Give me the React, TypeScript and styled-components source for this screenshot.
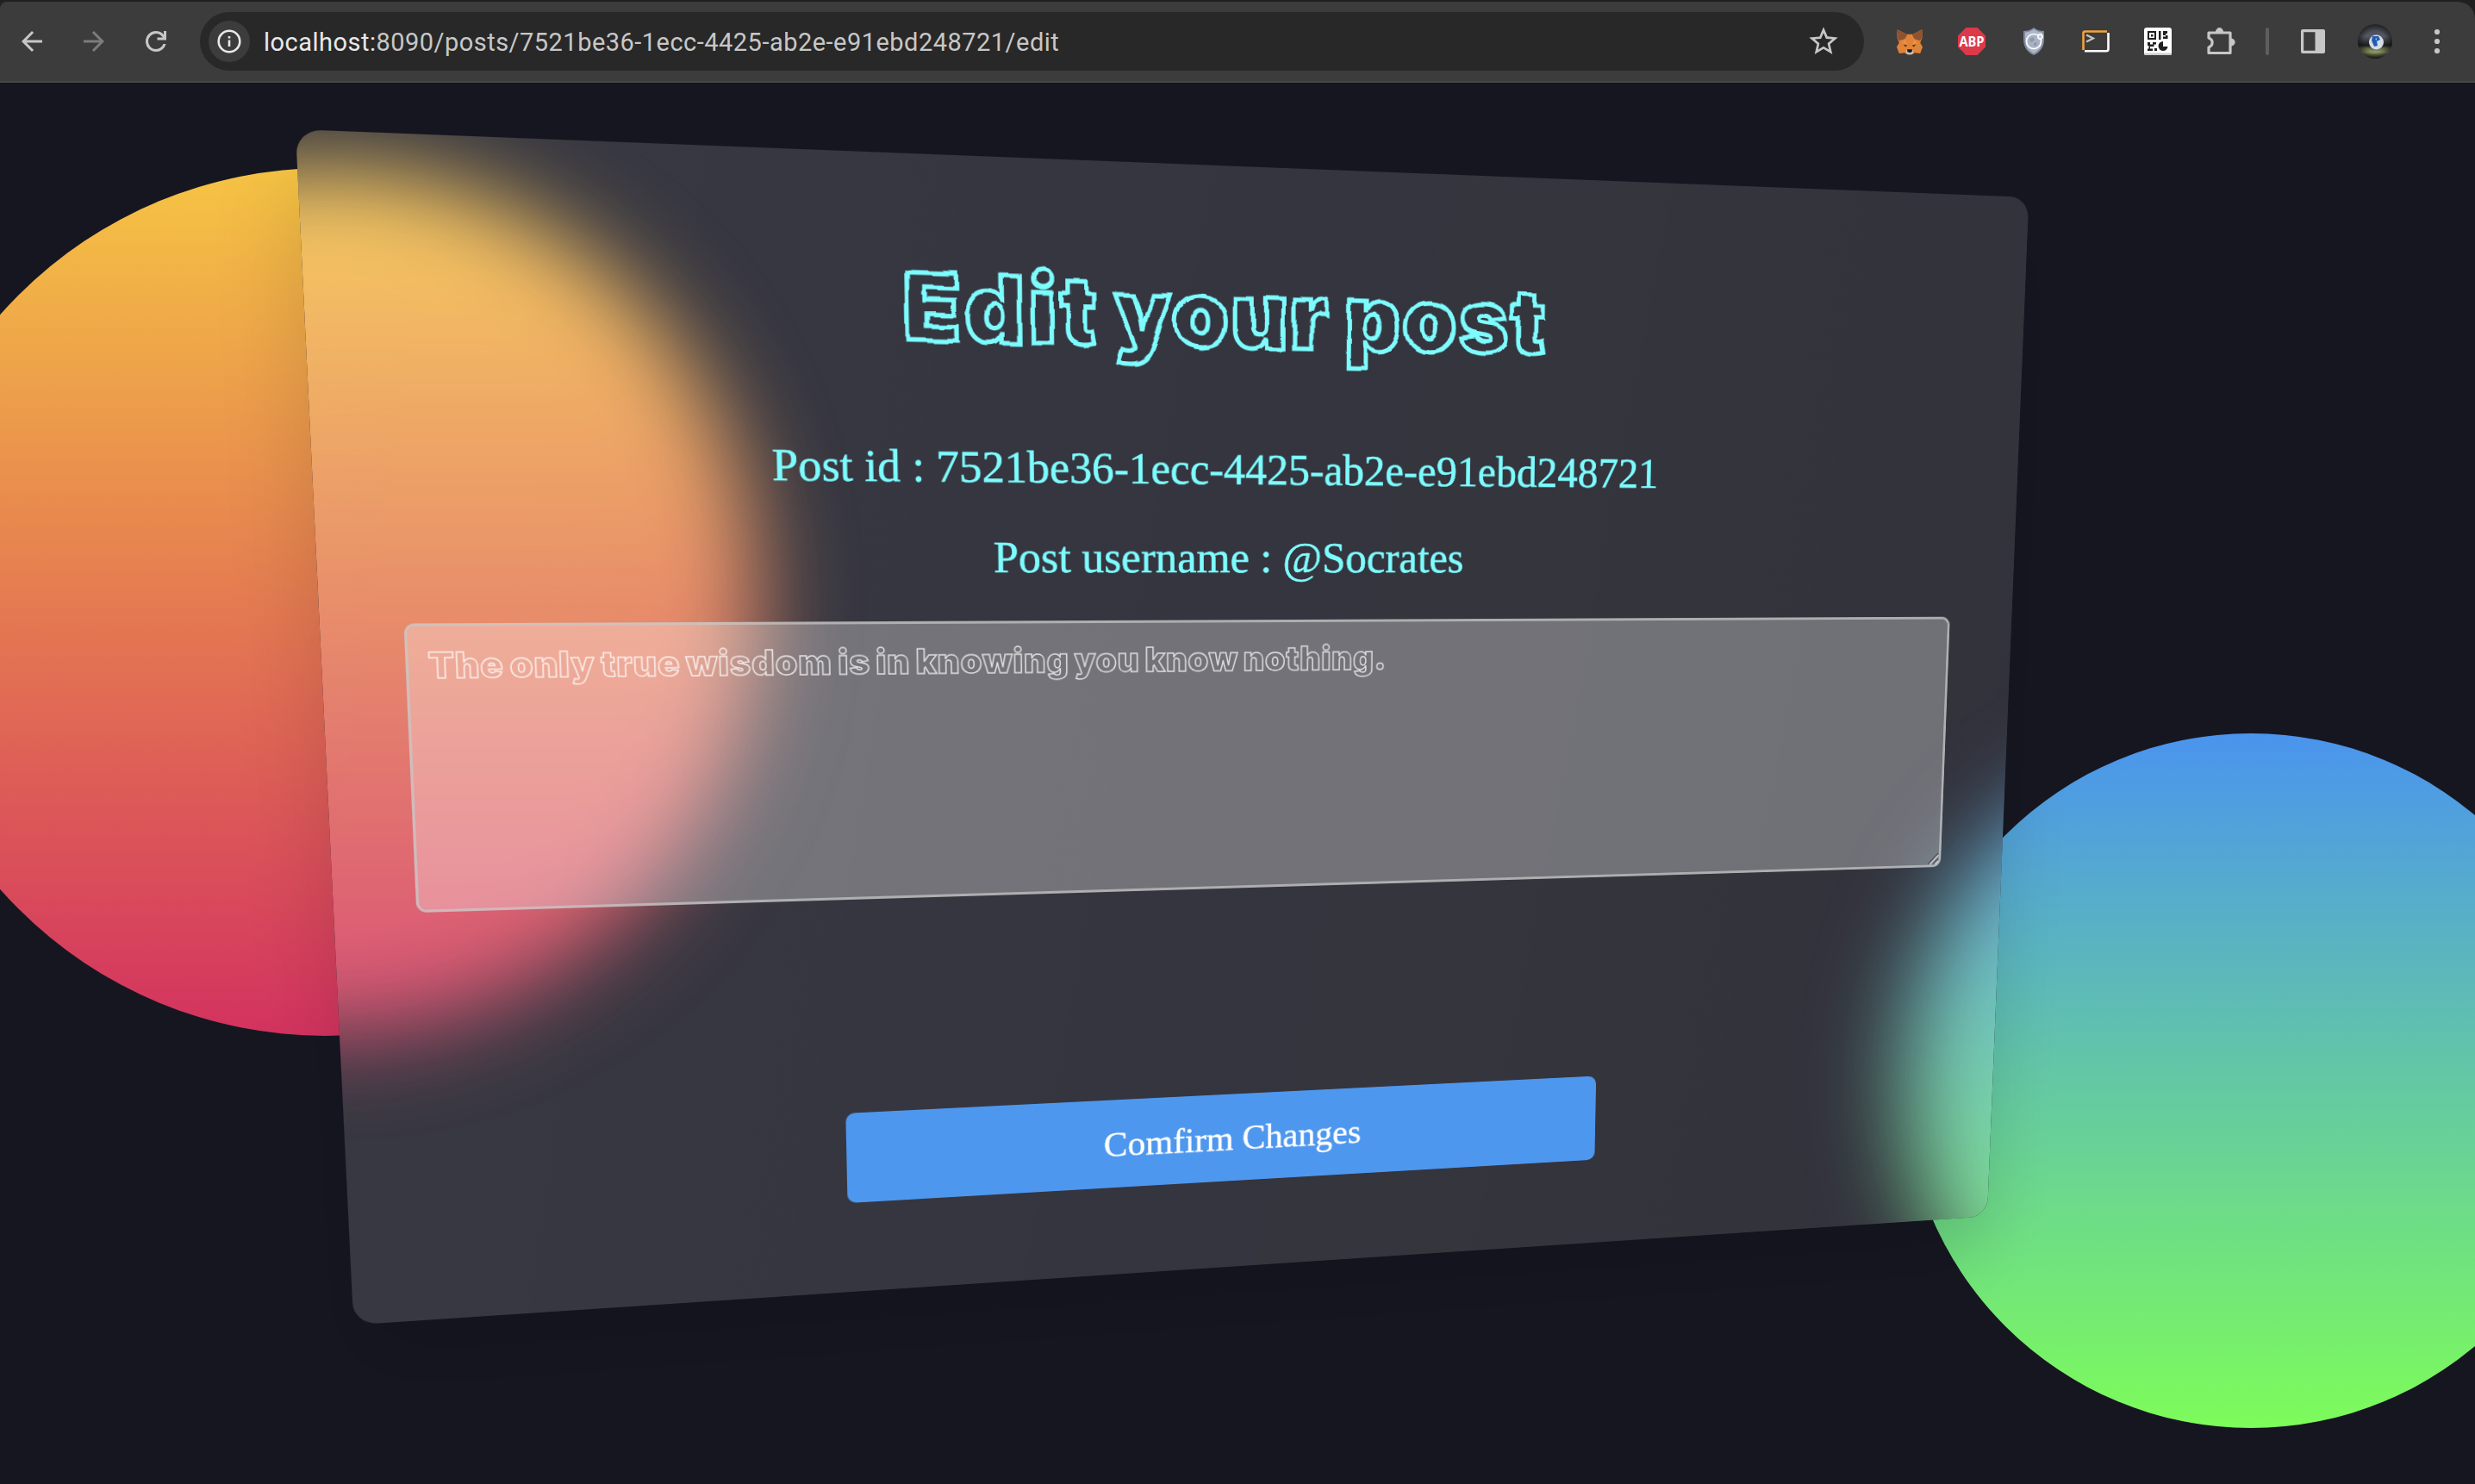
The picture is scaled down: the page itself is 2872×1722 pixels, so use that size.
import React from "react";
import styled, { createGlobalStyle } from "styled-components";

type Point = [number, number];
type Matrix = { a: number; b: number; c: number; d: number; e: number; f: number; g: number; k: number };

const CARD_W = 1970;
const CARD_H = 1288;
const CARD_RADIUS = 25;

/* Where the untilted card sits on the stage (it is centred there). */
const STAGE_W = 2872;
const STAGE_H = 1626;
const ORIGIN: Point = [(STAGE_W - CARD_W) / 2, (STAGE_H - CARD_H) / 2];

/** Solves the projection that puts the corners of a w x h box on the given points. */
function project(w: number, h: number, [p0, p1, p2, p3]: [Point, Point, Point, Point]): Matrix {
  const dx1 = p1[0] - p2[0];
  const dx2 = p3[0] - p2[0];
  const dx3 = p0[0] - p1[0] + p2[0] - p3[0];
  const dy1 = p1[1] - p2[1];
  const dy2 = p3[1] - p2[1];
  const dy3 = p0[1] - p1[1] + p2[1] - p3[1];
  const det = dx1 * dy2 - dx2 * dy1;
  const g = (dx3 * dy2 - dx2 * dy3) / det;
  const k = (dx1 * dy3 - dx3 * dy1) / det;
  return {
    a: (p1[0] - p0[0] + g * p1[0]) / w,
    b: (p3[0] - p0[0] + k * p3[0]) / h,
    c: p0[0],
    d: (p1[1] - p0[1] + g * p1[1]) / w,
    e: (p3[1] - p0[1] + k * p3[1]) / h,
    f: p0[1],
    g: g / w,
    k: k / h,
  };
}

const m = project(CARD_W, CARD_H, [
  [-108.1, -115],
  [1903.4, -36.1],
  [1854.9, 1146.5],
  [-40.7, 1272.4],
]);

const cardTilt = `matrix3d(${[m.a, m.d, 0, m.g, m.b, m.e, 0, m.k, 0, 0, 1, 0, m.c, m.f, 0, 1]
  .map((v) => v.toFixed(10))
  .join(",")})`;

/** A point of the card, as it falls on the stage. */
function onStage(x: number, y: number): string {
  const w = m.g * x + m.k * y + 1;
  const px = (m.a * x + m.b * y + m.c) / w + ORIGIN[0];
  const py = (m.d * x + m.e * y + m.f) / w + ORIGIN[1];
  return `${px.toFixed(2)} ${py.toFixed(2)}`;
}

/** Outline of the tilted card, rounded corners included. */
function cardOutline(): string {
  const W = CARD_W;
  const H = CARD_H;
  const r = CARD_RADIUS;
  const q = r * 0.4477;
  const p = onStage;
  return [
    `M ${p(r, 0)}`,
    `L ${p(W - r, 0)} C ${p(W - q, 0)} ${p(W, q)} ${p(W, r)}`,
    `L ${p(W, H - r)} C ${p(W, H - q)} ${p(W - q, H)} ${p(W - r, H)}`,
    `L ${p(r, H)} C ${p(q, H)} ${p(0, H - q)} ${p(0, H - r)}`,
    `L ${p(0, r)} C ${p(0, q)} ${p(q, 0)} ${p(r, 0)} Z`,
  ].join(" ");
}

const GlobalStyle = createGlobalStyle`
  html, body { margin: 0; background: #161621; }
  *, *::before, *::after { box-sizing: border-box; }
`;

const Window = styled.div`
  display: flex;
  flex-direction: column;
  width: 2872px;
  height: 1722px;
  overflow: hidden;
  background: #161621;
`;

const Strip = styled.div`
  flex: none;
  height: 96px;
  padding-top: 2px;
  background: #202020;
`;

const Toolbar = styled.header`
  display: flex;
  align-items: center;
  height: 94px;
  padding: 0 0 0 19px;
  background: #3c3c3c;
  border-bottom: 2px solid #474747;
  border-radius: 8px 20px 0 0;
  font-family: Roboto, "Liberation Sans", sans-serif;
`;

const NavButtons = styled.nav`
  display: flex;
  align-items: center;
  gap: 36px;
  width: 213px;
  flex: none;
`;

const NavIcon = styled.svg<{ $dim?: boolean; $size?: number }>`
  width: ${(p) => p.$size ?? 36}px;
  height: ${(p) => p.$size ?? 36}px;
  flex: none;
  fill: ${(p) => (p.$dim ? "#7c7c7c" : "#c7c7c7")};
`;

const AddressBar = styled.div`
  display: flex;
  align-items: center;
  flex: none;
  width: 1931px;
  height: 68px;
  padding: 0 27px 0 10px;
  border-radius: 34px;
  background: #282828;
`;

const InfoBadge = styled.span`
  display: flex;
  align-items: center;
  justify-content: center;
  width: 48px;
  height: 48px;
  border-radius: 50%;
  background: #3c3c3c;
`;

const Url = styled.span`
  flex: 1;
  margin-left: 16px;
  padding-top: 1px;
  font-size: 29px;
  letter-spacing: 0.48px;
  color: #c7c7c7;
  white-space: nowrap;
`;

const Host = styled.span`
  color: #e8e8e8;
`;

const Extensions = styled.div`
  display: flex;
  align-items: center;
  margin-left: 9px;
`;

const Slot = styled.span<{ $w: number }>`
  display: flex;
  align-items: center;
  justify-content: center;
  flex: none;
  width: ${(p) => p.$w}px;
  height: 48px;
`;

const Divider = styled.span`
  width: 4px;
  height: 32px;
  border-radius: 2px;
  background: #5e5e5e;
`;

const Stage = styled.main`
  position: relative;
  flex: 1;
  display: flex;
  align-items: center;
  justify-content: center;
  overflow: hidden;
`;

const Circle = styled.div<{ $size: number; $x: number; $y: number; $from: string; $to: string }>`
  position: absolute;
  left: ${(p) => p.$x}px;
  top: ${(p) => p.$y}px;
  width: ${(p) => p.$size}px;
  height: ${(p) => p.$size}px;
  border-radius: 50%;
  background: linear-gradient(${(p) => p.$from}, ${(p) => p.$to});
`;

const Frost = styled.div`
  position: absolute;
  inset: 0;
  z-index: 1;
  background: #161621;
  clip-path: path("${cardOutline()}");

  ${Circle} {
    filter: blur(52px);
  }
`;

const Card = styled.form`
  position: relative;
  z-index: 2;
  flex: none;
  display: flex;
  flex-direction: column;
  align-items: center;
  width: ${CARD_W}px;
  height: ${CARD_H}px;
  padding: 103px 80px 0;
  border-radius: ${CARD_RADIUS}px;
  background: linear-gradient(100deg, rgba(255, 255, 255, 0.15), rgba(255, 255, 255, 0.118));
  box-shadow: 0 50px 90px rgba(0, 0, 0, 0.14);
  transform-origin: 0 0;
  transform: ${cardTilt};
`;

const Title = styled.h1`
  display: flex;
  gap: 20px;
  margin: 0 0 63px;
  font: 900 102px/124px Inter, "Liberation Sans", sans-serif;
  white-space: nowrap;
  color: transparent;
  -webkit-text-stroke: 5px #7dfcfe;
  stroke-linejoin: round;
  filter: url(#handmade);
`;

const Word = styled.span<{ $tracking: number }>`
  letter-spacing: ${(p) => p.$tracking}px;
  margin-right: -${(p) => p.$tracking}px;
`;

const Detail = styled.p`
  margin: 0;
  font: 50.4px/101px "Liberation Serif", "Times New Roman", serif;
  white-space: nowrap;
  color: #7dfcfe;
  -webkit-text-stroke: 0.5px #7dfcfe;
`;

const EditorFrame = styled.div`
  position: relative;
  flex: none;
  margin: 21px 0 248px;
`;

const Editor = styled.textarea`
  display: block;
  width: 1802px;
  height: 315px;
  padding: 16px 20px;
  border: 3px solid rgba(205, 205, 205, 0.8);
  border-radius: 11px;
  outline: none;
  resize: none;
  background: rgba(255, 255, 255, 0.3);
  background-clip: padding-box;
  font: 900 38px/52px Inter, "Liberation Sans", sans-serif;
  letter-spacing: 1px;
  word-spacing: -2.5px;
  color: transparent;
  -webkit-text-stroke: 1.5px rgba(255, 255, 255, 0.75);
`;

const Grip = styled.svg`
  position: absolute;
  right: 3px;
  bottom: 3px;
  width: 16px;
  height: 16px;
  fill: none;
  stroke-width: 1.8;
`;

const Submit = styled.button`
  flex: none;
  width: 901px;
  height: 106px;
  padding: 0;
  border: 0;
  border-radius: 10px;
  background: #4e97ee;
  font: 42.1px "Liberation Serif", "Times New Roman", serif;
  color: #fff;
  -webkit-text-stroke: 0.4px #fff;
`;

const StarIcon = () => (
  <NavIcon viewBox="0 0 24 24" $size={40}>
    <path d="M22 9.24l-7.19-.62L12 2 9.19 8.63 2 9.24l5.46 4.73L5.82 21 12 17.27 18.18 21l-1.63-7.03L22 9.24zM12 15.4l-3.76 2.27 1-4.28-3.32-2.88 4.38-.38L12 6.1l1.71 4.04 4.38.38-3.32 2.88 1 4.28L12 15.4z" />
  </NavIcon>
);

const FoxIcon = () => (
  <svg width="32" height="31" viewBox="0 0 34 46" preserveAspectRatio="none">
    <path d="M2 2 L13 10 H21 L32 2 L33 14 L30 25 L33 32 L30 43 L23 42 L20 45 H14 L11 42 L4 43 L1 32 L4 25 L1 14 Z" fill="#e2833a" />
    <path d="M2 2 L14 11 L11 18 L4 21 L1 14 Z M32 2 L20 11 L23 18 L30 21 L33 14 Z" fill="#8f5330" />
    <path d="M11 18 L8 27 L14 29 Z M23 18 L26 27 L20 29 Z" fill="#ec9145" />
    <path d="M9 27 L14 29 L12 32 Z M25 27 L20 29 L22 32 Z" fill="#4a3424" />
    <path d="M13 37 H21 L22 42 L19 45 H15 L12 42 Z" fill="#cfc0b2" />
    <path d="M14 36 H20 L20 40 L17 42 L14 40 Z" fill="#1a1a1a" />
  </svg>
);

const AbpIcon = () => (
  <svg width="32" height="32" viewBox="0 0 32 32">
    <path d="M9.4 0 H22.6 L32 9.4 V22.6 L22.6 32 H9.4 L0 22.6 V9.4 Z" fill="#dc394a" />
    <text x="16" y="21.6" textAnchor="middle" textLength="29" lengthAdjust="spacingAndGlyphs" fontFamily="Open Sans, sans-serif" fontWeight="700" fontSize="16" fill="#fff">
      ABP
    </text>
  </svg>
);

const ShieldIcon = () => (
  <svg width="26" height="32" viewBox="0 0 26 32">
    <path d="M13 0 C17 3 21 4 25 4 V14 C25 23 20 29 13 32 C6 29 1 23 1 14 V4 C5 4 9 3 13 0Z" fill="#7f8aa3" />
    <path d="M13 2 C17 4.500 20 5.500 23 5.500 V14 C23 22 19 27 13 30 C7 27 3 22 3 14 V5.500 C6 5.500 9 4.500 13 2Z" fill="#aeb7c8" />
    <circle cx="13" cy="16" r="8.500" fill="#aab3c4" stroke="#fff" strokeWidth="1.600" />
    <path d="M8 13 L12 11 L14 14 L11 17 L9 16Z M13 18 L17 17 L16 21 L13 21Z" fill="#8d97ad" />
    <circle cx="20.500" cy="10.500" r="2.700" fill="#c5ccd8" stroke="#fff" strokeWidth="1.500" />
  </svg>
);

const TerminalIcon = () => (
  <svg width="32" height="26" viewBox="0 0 32 26" fill="none" strokeWidth="2.600">
    <path d="M1.500 23 V3.500 Q1.500 1.500 3.500 1.500 H29" stroke="#f1a33c" />
    <path d="M30.500 3 V22 Q30.500 24.300 28 24.300 H3" stroke="#fff" />
    <path d="M5 5.500 L13 9.500 L5 13.500" stroke="#c7c7c7" strokeWidth="2.200" />
  </svg>
);

const QrIcon = () => (
  <svg width="32" height="32" viewBox="0 0 32 32">
    <rect width="32" height="32" rx="3" fill="#fff" />
    <rect y="29.500" width="32" height="2.500" rx="1.200" fill="#cfcfcf" />
    <g fill="#1f1f1f">
      <path d="M4 4 H14 V14 H4 Z M6 6 V12 H12 V6 Z" fillRule="evenodd" />
      <rect x="8" y="8" width="2.500" height="2.500" />
      <path d="M17 4 H19.500 V14 H17 Z M22 4 H27 V7 H25 V9 H22Z M25 9 H27.500 V13 H22 V10.500 H25Z" />
      <path d="M4 17 H7 V19.500 H10 V17 H14 V19.500 H11.500 V22 H7 V24.500 H10 V27 H4 V24.500 H5.500 V21 H4Z M12 24 H15 V27 H12Z" />
      <path d="M22 16 A5.500 5.500 0 1 0 27.500 22 H22 Z" />
    </g>
  </svg>
);

const PuzzleIcon = () => (
  <svg width="36" height="36" viewBox="0 0 36 36" fill="none" stroke="#c7c7c7" strokeWidth="3.200" strokeLinejoin="round">
    <path d="M4 8 H29 V31.500 H4 V25 C9.500 22.500 9.500 16 4 14 Z" />
    <path d="M12.500 7 C12.500 1 20.500 1 20.500 7 Z M30 15 C35.500 15 35.500 23 30 23 Z" fill="#c7c7c7" strokeWidth="1" />
  </svg>
);

const PanelIcon = () => (
  <svg width="30" height="30" viewBox="0 0 30 30">
    <path d="M3 1 H27 Q29 1 29 3 V27 Q29 29 27 29 H3 Q1 29 1 27 V3 Q1 1 3 1 Z M4.200 4.200 V25.800 H17.500 V4.200 Z" fill="#c7c7c7" fillRule="evenodd" />
  </svg>
);

const AvatarIcon = () => (
  <svg width="40" height="40" viewBox="0 0 40 40">
    <defs>
      <linearGradient id="pitch" x1="0" y1="0" x2="0" y2="1">
        <stop offset="0" stopColor="#3b3e45" />
        <stop offset="0.35" stopColor="#565a62" />
        <stop offset="0.62" stopColor="#191b1d" />
        <stop offset="0.7" stopColor="#5d6740" />
        <stop offset="0.82" stopColor="#98a26d" />
        <stop offset="1" stopColor="#1f2413" />
      </linearGradient>
      <radialGradient id="vignette" cx="0.5" cy="0.5" r="0.5">
        <stop offset="0.6" stopColor="#101114" stopOpacity="0" />
        <stop offset="1" stopColor="#101114" stopOpacity="0.65" />
      </radialGradient>
    </defs>
    <circle cx="20" cy="20" r="20" fill="url(#pitch)" />
    <circle cx="20" cy="20" r="20" fill="url(#vignette)" />
    <circle cx="21.500" cy="21" r="8.500" fill="#d5dce8" />
    <path d="M17 14 L24 14 L26 18 L22 20 L23 25 L19 26 L16 19Z" fill="#2459b4" />
    <path d="M20 17 L22 16 L22 19Z" fill="#7fc4f0" />
  </svg>
);

const MenuIcon = () => (
  <svg width="8" height="30" viewBox="0 0 8 30" fill="#c7c7c7">
    <circle cx="4" cy="4" r="3.100" />
    <circle cx="4" cy="15" r="3.100" />
    <circle cx="4" cy="26" r="3.100" />
  </svg>
);

/* Gives the outlined heading its uneven, cut-out edges. */
const HandmadeFilter = () => (
  <svg width="0" height="0" style={{ position: "absolute" }} aria-hidden="true">
    <filter id="handmade" x="-5%" y="-10%" width="110%" height="120%" colorInterpolationFilters="sRGB">
      <feTurbulence type="fractalNoise" baseFrequency="0.035" numOctaves="1" seed="7" result="noise" />
      <feDisplacementMap in="SourceGraphic" in2="noise" scale="8" xChannelSelector="R" yChannelSelector="G" />
    </filter>
  </svg>
);

const Circles = () => (
  <>
    <Circle $size={1007} $x={-126} $y={98.5} $from="#f6c443" $to="#d3325f" />
    <Circle $size={806} $x={2209} $y={754.5} $from="#4a94ee" $to="#7dfc5a" />
  </>
);

export default function App() {
  return (
    <>
      <GlobalStyle />
      <HandmadeFilter />
      <Window>
        <Strip>
          <Toolbar>
            <NavButtons>
              <NavIcon viewBox="0 0 24 24">
                <path d="M20 11H7.830l5.590-5.590L12 4l-8 8 8 8 1.410-1.410L7.830 13H20v-2z" />
              </NavIcon>
              <NavIcon viewBox="0 0 24 24" $dim>
                <path d="M4 11h12.170l-5.590-5.590L12 4l8 8-8 8-1.410-1.410L16.170 13H4v-2z" />
              </NavIcon>
              <NavIcon viewBox="0 0 24 24">
                <path d="M12 20q-3.350 0-5.675-2.325T4 12t2.325-5.675T12 4q1.725 0 3.300.712T18 6.750V4h2v7h-7V9h4.200q-.8-1.400-2.187-2.200T12 6Q9.500 6 7.750 7.750T6 12t1.750 4.250T12 18q1.925 0 3.475-1.100T17.650 14h2.100q-.7 2.650-2.850 4.325T12 20" />
              </NavIcon>
            </NavButtons>
            <AddressBar>
              <InfoBadge>
                <svg width="28" height="28" viewBox="0 0 28 28">
                  <circle cx="14" cy="14" r="12.300" fill="none" stroke="#e8e8e8" strokeWidth="2.600" />
                  <path d="M12.700 12.500 H15.300 V20 H12.700Z M12.700 8 H15.300 V10.600 H12.700Z" fill="#e8e8e8" />
                </svg>
              </InfoBadge>
              <Url>
                <Host>localhost:</Host>8090/posts/7521be36-1ecc-4425-ab2e-e91ebd248721/edit
              </Url>
              <StarIcon />
            </AddressBar>
            <Extensions>
              <Slot $w={88}><FoxIcon /></Slot>
              <Slot $w={56}><AbpIcon /></Slot>
              <Slot $w={88}><ShieldIcon /></Slot>
              <Slot $w={56}><TerminalIcon /></Slot>
              <Slot $w={88}><QrIcon /></Slot>
              <Slot $w={58}><PuzzleIcon /></Slot>
              <Slot $w={50}><Divider /></Slot>
              <Slot $w={56}><PanelIcon /></Slot>
              <Slot $w={88}><AvatarIcon /></Slot>
              <Slot $w={56}><MenuIcon /></Slot>
            </Extensions>
          </Toolbar>
        </Strip>
        <Stage>
          <Circles />
          <Frost>
            <Circles />
          </Frost>
          <Card>
            <Title>
              <Word $tracking={5}>Edit</Word>
              <Word $tracking={2.5}>your</Word>
              <Word $tracking={3.5}>post</Word>
            </Title>
            <Detail>Post id : 7521be36-1ecc-4425-ab2e-e91ebd248721</Detail>
            <Detail>Post username : @Socrates</Detail>
            <EditorFrame>
              <Editor spellCheck={false} defaultValue="The only true wisdom is in knowing you know nothing." />
              <Grip viewBox="0 0 16 16">
                <path d="M2 15 L15 2 M9 15 L15 9" stroke="#4d4d55" />
                <path d="M4 15.500 L15.500 4 M11 15.500 L15.500 11" stroke="#d0d0d4" />
              </Grip>
            </EditorFrame>
            <Submit type="button">Comfirm Changes</Submit>
          </Card>
        </Stage>
      </Window>
    </>
  );
}
